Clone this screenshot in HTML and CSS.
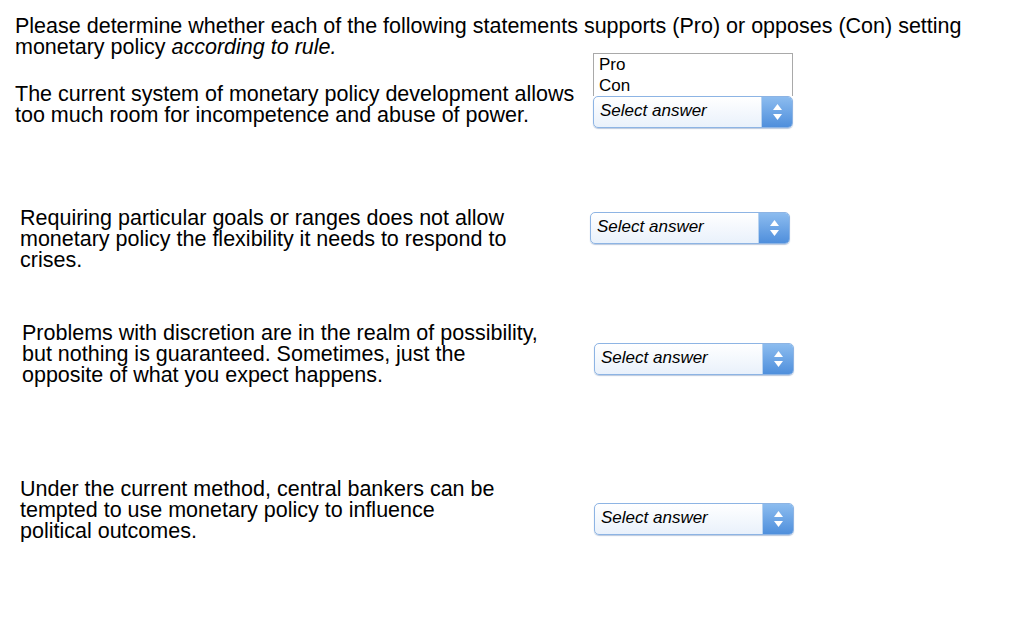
FILE: index.html
```html
<!DOCTYPE html>
<html lang="en">
<head>
    <meta charset="UTF-8">
    <meta name="viewport" content="width=device-width, initial-scale=1.0">
    <title>Rule vs discretion</title>
    <link rel="stylesheet" href="styles.css">
</head>
<body>
    <!-- Instructions -->
    <p class="intro">Please determine whether each of the following statements supports (Pro) or opposes (Con) setting monetary policy <i>according to rule.</i></p>

    <!-- Statement 1 (list open) -->
    <div class="row row-1">
        <p class="question">The current system of monetary policy development allows too much room for incompetence and abuse of power.</p>
        <div class="picker">
            <ul class="options">
                <li>Pro</li>
                <li>Con</li>
            </ul>
            <div class="select">
                <span class="select-text">Select answer</span>
                <span class="select-btn">
                    <svg width="11" height="18" viewBox="0 0 11 18"><path d="M5.5 1 L10 7 L1 7 Z" fill="#fff"/><path d="M1 11 L10 11 L5.5 17 Z" fill="#fff"/></svg>
                </span>
            </div>
        </div>
    </div>

    <!-- Statement 2 -->
    <div class="row row-2">
        <p class="question">Requiring particular goals or ranges does not allow monetary policy the flexibility it needs to respond to crises.</p>
        <div class="picker">
            <div class="select">
                <span class="select-text">Select answer</span>
                <span class="select-btn">
                    <svg width="11" height="18" viewBox="0 0 11 18"><path d="M5.5 1 L10 7 L1 7 Z" fill="#fff"/><path d="M1 11 L10 11 L5.5 17 Z" fill="#fff"/></svg>
                </span>
            </div>
        </div>
    </div>

    <!-- Statement 3 -->
    <div class="row row-3">
        <p class="question">Problems with discretion are in the realm of possibility, but nothing is guaranteed. Sometimes, just the opposite of what you expect happens.</p>
        <div class="picker">
            <div class="select">
                <span class="select-text">Select answer</span>
                <span class="select-btn">
                    <svg width="11" height="18" viewBox="0 0 11 18"><path d="M5.5 1 L10 7 L1 7 Z" fill="#fff"/><path d="M1 11 L10 11 L5.5 17 Z" fill="#fff"/></svg>
                </span>
            </div>
        </div>
    </div>

    <!-- Statement 4 -->
    <div class="row row-4">
        <p class="question">Under the current method, central bankers can be tempted to use monetary policy to influence political outcomes.</p>
        <div class="picker">
            <div class="select">
                <span class="select-text">Select answer</span>
                <span class="select-btn">
                    <svg width="11" height="18" viewBox="0 0 11 18"><path d="M5.5 1 L10 7 L1 7 Z" fill="#fff"/><path d="M1 11 L10 11 L5.5 17 Z" fill="#fff"/></svg>
                </span>
            </div>
        </div>
    </div>
</body>
</html>
```

FILE: styles.css
```css
body {
    margin: 0;
    background-color: #fff;
    color: #000;
    font-family: "Liberation Sans", Arial, sans-serif;
    font-size: 21.5px;
    line-height: 21px;
}
p {
    margin: 0;
}
.intro {
    padding: 16px 0 0 15px;
    width: 990px;
}
.row {
    display: flex;
    align-items: flex-start;
    justify-content: space-between;
    box-sizing: border-box;
}
.row-1 {
    margin-top: 26px;
    padding-left: 15px;
    width: 793px;
}
.row-1 .question { width: 575px; }
.row-1 .picker { margin-top: 12px; }
.row-2 {
    margin-top: 80px;
    padding-left: 20px;
    width: 790px;
}
.row-2 .question { width: 510px; }
.row-2 .picker { margin-top: 4px; }
.row-3 {
    margin-top: 52px;
    padding-left: 22px;
    width: 794px;
}
.row-3 .question { width: 526px; }
.row-3 .picker { margin-top: 20px; }
.row-4 {
    margin-top: 93px;
    padding-left: 20px;
    width: 794px;
}
.row-4 .question { width: 485px; }
.row-4 .picker { margin-top: 24px; }

.picker {
    position: relative;
    width: 200px;
}
.options {
    position: absolute;
    left: 0;
    bottom: 100%;
    width: 200px;
    height: 43px;
    box-sizing: border-box;
    margin: 0;
    padding: 0 0 0 5px;
    list-style: none;
    background: #fff;
    border: 1px solid #a9a9a9;
    border-bottom: none;
    font-size: 17px;
    line-height: 21px;
}
.select {
    display: flex;
    height: 32px;
    box-sizing: border-box;
    border: 1px solid #8db4e4;
    border-radius: 5px;
    background: linear-gradient(to bottom, #ffffff, #e9f1fb);
    box-shadow: 0 1px 1px rgba(60, 100, 160, 0.35);
    overflow: hidden;
}
.select-text {
    flex: 1;
    padding-left: 6px;
    font-size: 17px;
    font-style: italic;
    line-height: 28px;
}
.select-btn {
    display: flex;
    align-items: center;
    justify-content: center;
    width: 30px;
    background: linear-gradient(to bottom, #8cbcef, #4f8fdc);
    border-left: 1px solid #b7d2f0;
}
```
